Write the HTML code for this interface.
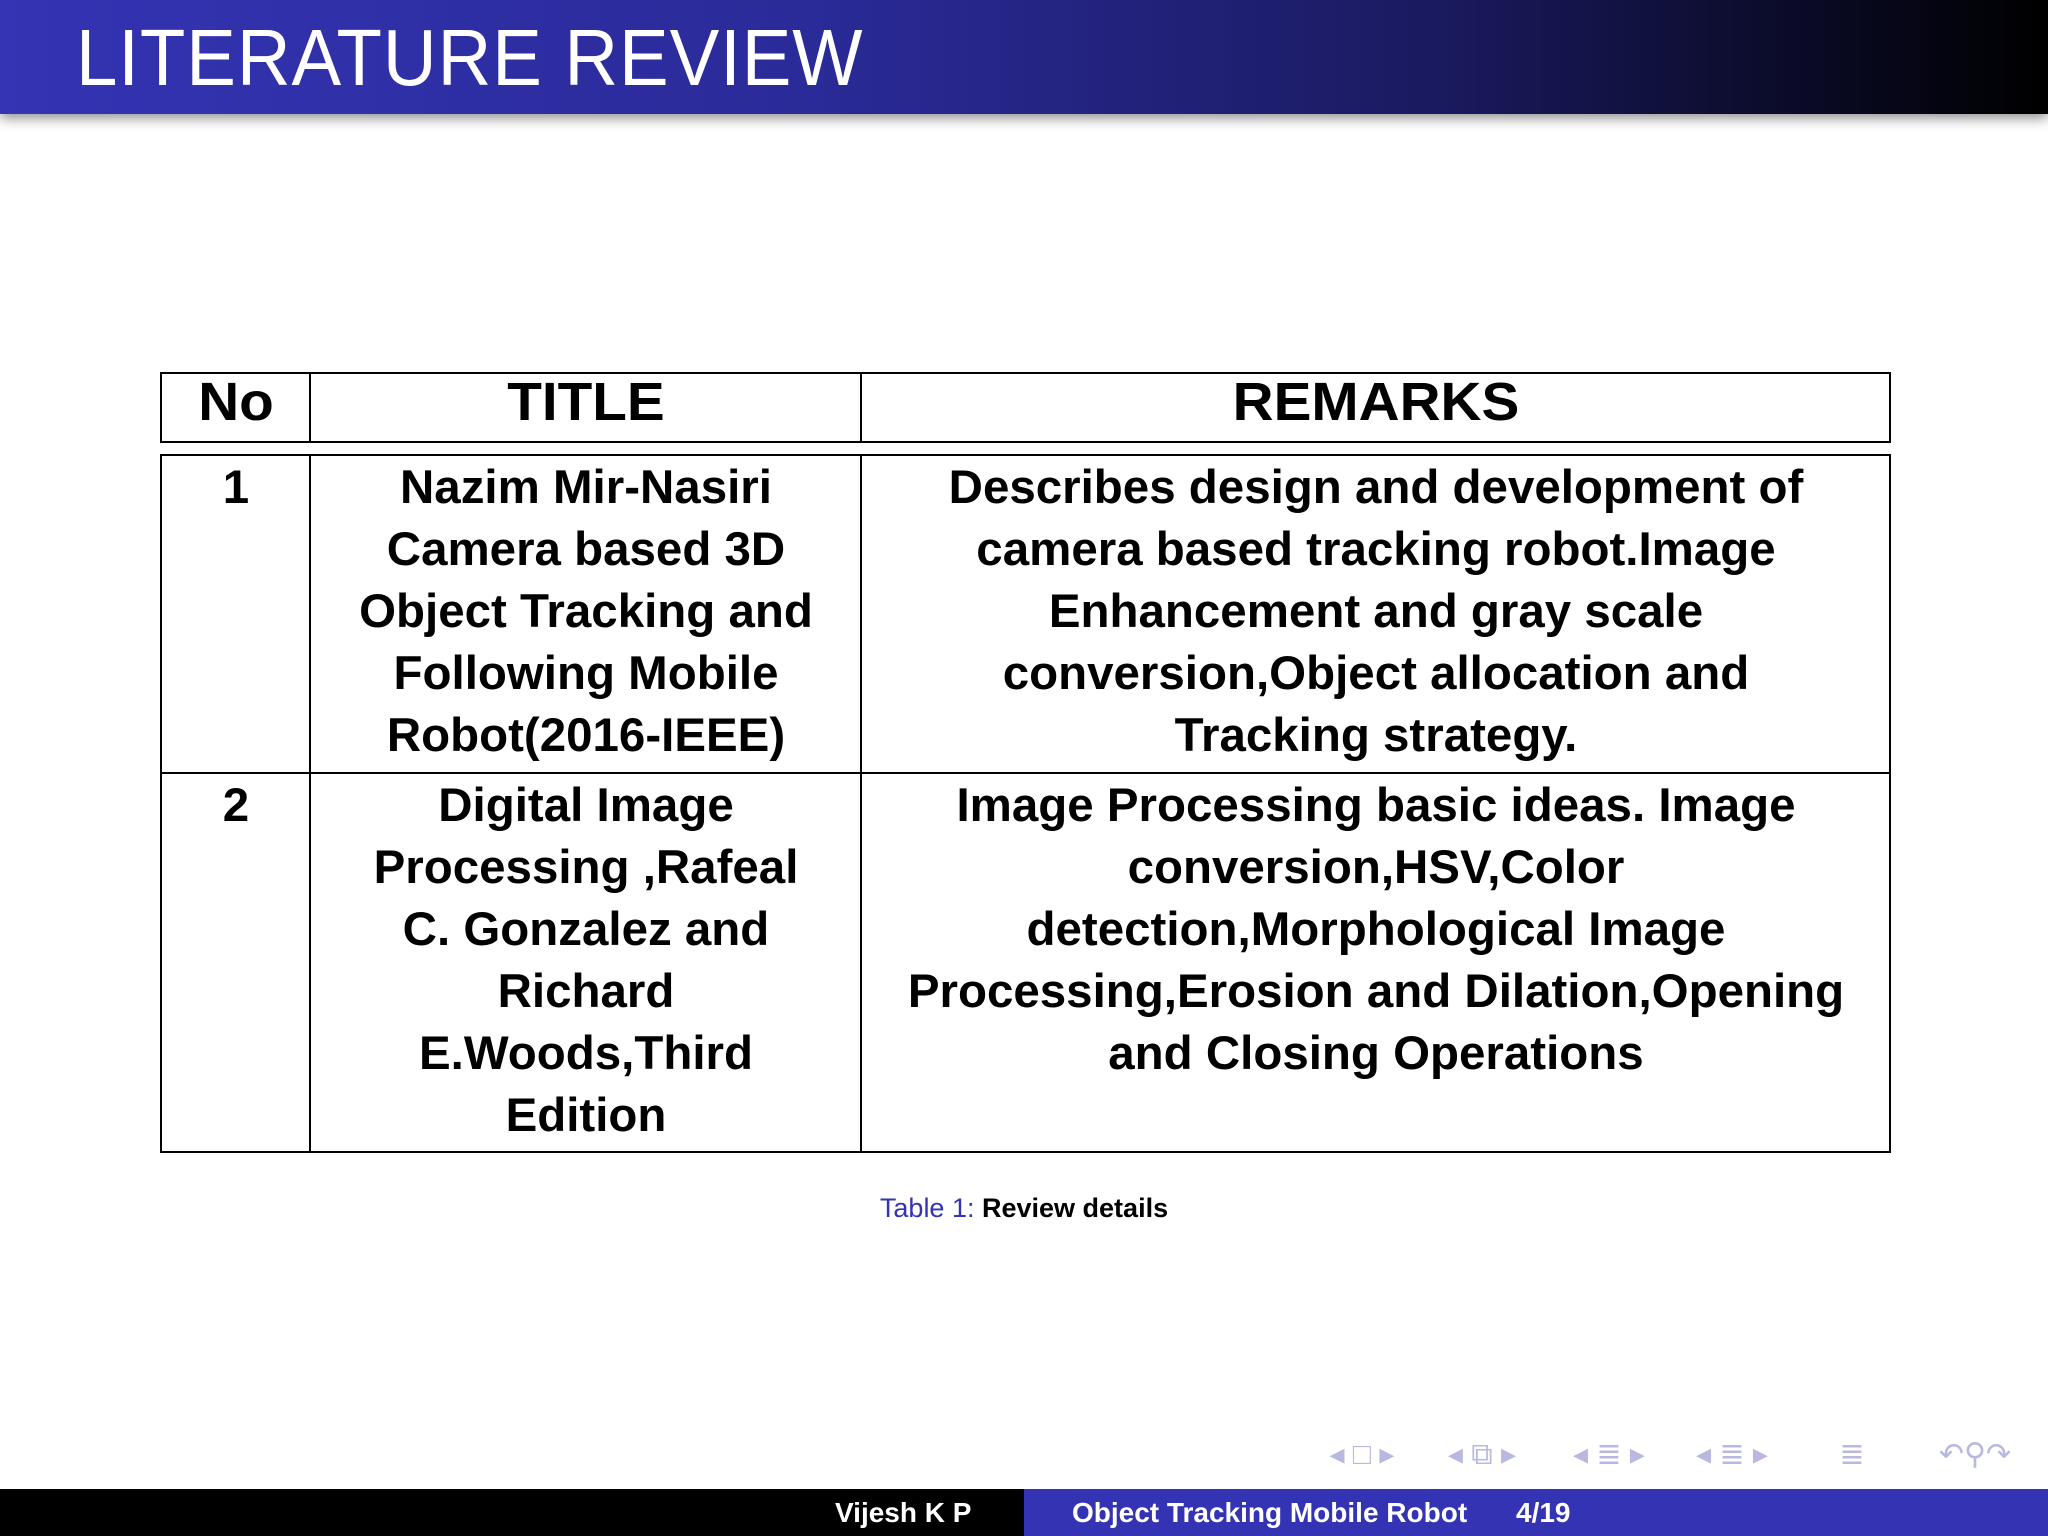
<!DOCTYPE html>
<html><head><meta charset="utf-8"><style>
body{margin:0;width:2048px;height:1536px;position:relative;background:#fff;font-family:"Liberation Sans",sans-serif;overflow:hidden}
.hdr{position:absolute;left:0;top:0;width:2048px;height:114px;background:linear-gradient(90deg,#3434b4 0%,#2a2a98 40%,#1a1a60 70%,#000 100%);box-shadow:0 4px 12px rgba(0,0,0,0.45)}
.hdr span{position:absolute;left:76px;top:12px;font-size:80px;color:#fff;transform:scaleX(0.93);transform-origin:left;white-space:nowrap;letter-spacing:1px}
.b{position:absolute;border:2px solid #000;box-sizing:border-box}
.v{position:absolute;width:2px;background:#000}
.h{position:absolute;height:2px;background:#000}
.t{position:absolute;font-weight:bold;text-align:center;white-space:nowrap;transform:translateX(-50%) scaleX(1.01);font-size:47px;line-height:62px;color:#000}
.th{transform:translateX(-50%) scaleX(1.05)}
.foot{position:absolute;top:1489px;height:47px;font-size:28px;color:#fff;line-height:47px;white-space:nowrap}
.nav{position:absolute;top:1437px;font-size:30px;color:#b8b8e0;white-space:nowrap;transform:translateX(-50%)}
</style></head><body>
<div class="hdr"><span>LITERATURE REVIEW</span></div>

<div class="b" style="left:160px;top:372px;width:1731px;height:71px"></div>
<div class="b" style="left:160px;top:454px;width:1731px;height:699px"></div>
<div class="v" style="left:309px;top:372px;height:71px"></div>
<div class="v" style="left:860px;top:372px;height:71px"></div>
<div class="v" style="left:309px;top:454px;height:699px"></div>
<div class="v" style="left:860px;top:454px;height:699px"></div>
<div class="h" style="left:160px;top:772px;width:1731px"></div>

<div class="t th" style="left:236px;top:370px;font-size:54px;line-height:64px">No</div>
<div class="t th" style="left:586px;top:370px;font-size:54px;line-height:64px">TITLE</div>
<div class="t th" style="left:1376px;top:370px;font-size:54px;line-height:64px">REMARKS</div>

<div class="t" style="left:236px;top:456px">1</div>
<div class="t" style="left:586px;top:456px">Nazim Mir-Nasiri<br>Camera based 3D<br>Object Tracking and<br>Following Mobile<br>Robot(2016-IEEE)</div>
<div class="t" style="left:1376px;top:456px">Describes design and development of<br>camera based tracking robot.Image<br>Enhancement and gray scale<br>conversion,Object allocation and<br>Tracking strategy.</div>

<div class="t" style="left:236px;top:774px">2</div>
<div class="t" style="left:586px;top:774px">Digital Image<br>Processing ,Rafeal<br>C. Gonzalez and<br>Richard<br>E.Woods,Third<br>Edition</div>
<div class="t" style="left:1376px;top:774px">Image Processing basic ideas. Image<br>conversion,HSV,Color<br>detection,Morphological Image<br>Processing,Erosion and Dilation,Opening<br>and Closing Operations</div>

<div style="position:absolute;left:0;width:2048px;top:1191px;text-align:center;font-size:27px;line-height:34px"><span style="color:#3333b3">Table 1:</span> <b>Review details</b></div>

<div class="nav" style="left:1362px">◂ □ ▸</div>
<div class="nav" style="left:1482px">◂ ⧉ ▸</div>
<div class="nav" style="left:1609px">◂ ≣ ▸</div>
<div class="nav" style="left:1732px">◂ ≣ ▸</div>
<div class="nav" style="left:1852px">≣</div>
<div class="nav" style="left:1975px">↶⚲↷</div>

<div class="foot" style="left:0;width:1024px;background:#000"></div>
<div class="foot" style="left:1024px;width:1024px;background:#3333b3"></div>
<div class="foot" style="left:835px;font-weight:bold">Vijesh K P</div>
<div class="foot" style="left:1072px;font-weight:bold">Object Tracking Mobile Robot</div>
<div class="foot" style="left:1516px;font-weight:bold">4/19</div>
</body></html>
